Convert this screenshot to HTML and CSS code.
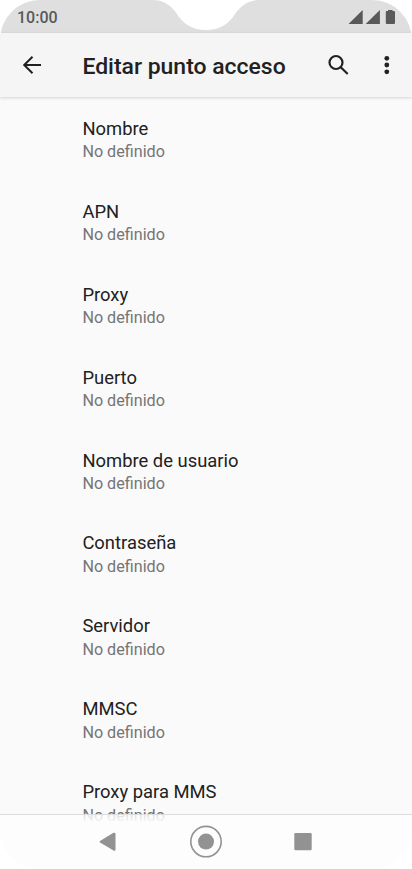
FILE: index.html
```html
<!DOCTYPE html>
<html lang="es">
<head>
<meta charset="utf-8">
<title>Editar punto acceso</title>
<link rel="stylesheet" href="styles.css">
</head>
<body>
<div class="phone">
  <div class="status">
    <span class="clock">10:00</span>
    <svg class="notch" width="108" height="31" viewBox="0 0 108 31"><path d="M0 0H108C95 0 88 6 81 17Q71 30 54 30Q37 30 27 17C20 6 13 0 0 0Z" fill="#fff"/></svg>
    <svg class="signals" width="48" height="16" viewBox="0 0 48 16" fill="#595959"><path d="M0.500 15L14.700 1V15ZM17.700 15L31.900 1V15ZM37.800 3Q37.800 2 38.800 2H40V1H44.500V2H46Q47 2 47 3V14Q47 15 46 15H38.800Q37.800 15 37.800 14Z"/></svg>
  </div>
  <header class="bar">
    <svg class="back" width="20" height="20" viewBox="0 0 20 20" fill="none" stroke="#212121" stroke-width="2"><path d="M19 10H2.500M10.500 1.700L2.200 10L10.500 18.300"/></svg>
    <h1 class="title">Editar punto acceso</h1>
    <svg class="search" width="22" height="22" viewBox="0 0 22 22" fill="none" stroke="#212121" stroke-width="2.200"><circle cx="8" cy="8.500" r="6.500"/><path d="M12.500 13L19.700 20"/></svg>
    <svg class="more" width="6" height="20" viewBox="0 0 6 20" fill="#212121"><circle cx="2.800" cy="3.300" r="2.400"/><circle cx="2.800" cy="10" r="2.400"/><circle cx="2.800" cy="16.800" r="2.400"/></svg>
  </header>
  <main class="list">
    <div class="item"><div class="name">Nombre</div><div class="value">No definido</div></div>
    <div class="item"><div class="name">APN</div><div class="value">No definido</div></div>
    <div class="item"><div class="name">Proxy</div><div class="value">No definido</div></div>
    <div class="item"><div class="name">Puerto</div><div class="value">No definido</div></div>
    <div class="item"><div class="name">Nombre de usuario</div><div class="value">No definido</div></div>
    <div class="item"><div class="name">Contraseña</div><div class="value">No definido</div></div>
    <div class="item"><div class="name">Servidor</div><div class="value">No definido</div></div>
    <div class="item"><div class="name">MMSC</div><div class="value">No definido</div></div>
    <div class="item"><div class="name">Proxy para MMS</div><div class="value">No definido</div></div>
  </main>
  <nav class="nav">
    <svg width="18" height="20" viewBox="0 0 18 20"><path d="M2 8.900Q1 9.700 2 10.500L15.500 18.600Q17.500 19.200 17.500 17.700V1.700Q17.500 0.200 15.500 0.800Z" fill="#929292"/></svg>
    <svg class="home" width="34" height="34" viewBox="0 0 34 34"><circle cx="17" cy="16.600" r="15.200" fill="none" stroke="#929292" stroke-width="1.600"/><circle cx="17" cy="16.600" r="8" fill="#929292"/></svg>
    <svg width="20" height="20" viewBox="0 0 20 20" class="recent"><rect x="1.300" y="1.100" width="17.400" height="17.200" rx="1.200" fill="#929292"/></svg>
  </nav>
</div>
</body>
</html>
```
FILE: styles.css
```css
* { box-sizing: border-box; }
body { margin: 0; background: #fff; font-family: Roboto, sans-serif; }
.phone {
  position: relative;
  width: 412px;
  height: 869px;
  overflow: hidden;
  display: flex;
  flex-direction: column;
  background: #fafafa;
  border-radius: 40px;
}
.status {
  position: relative;
  height: 33px;
  flex: none;
  display: flex;
  justify-content: space-between;
  padding: 9px 16px 0 17px;
  background: #dfdfdf;
}
.clock { font-size: 16px; line-height: 17px; font-weight: 500; color: #595959; }
.notch { position: absolute; left: 152px; top: 0; }
.bar {
  position: relative;
  height: 64px;
  flex: none;
  display: flex;
  align-items: center;
  padding: 0 22px;
  background: #f5f5f5;
  box-shadow: 0 1px 3px rgba(0, 0, 0, .16);
}
.title {
  margin: 3px 0 0 40.4px;
  width: 245.6px;
  font-size: 22.95px;
  line-height: 30px;
  font-weight: 500;
  color: #212121;
  white-space: nowrap;
}
.more { margin-left: auto; }
.list { flex: 1; padding: 20px 0 0 82.4px; }
.item { height: 82.9px; white-space: nowrap; }
.name { font-size: 18.4px; line-height: 24px; color: #212121; }
.value { margin-top: .4px; font-size: 16.15px; line-height: 22px; color: #757575; }
.nav {
  position: absolute;
  left: 0;
  right: 0;
  bottom: 0;
  height: 55px;
  display: flex;
  align-items: center;
  padding-left: 98px;
  background: linear-gradient(rgba(253, 253, 253, .78), #fdfdfd 9px);
  border-top: 1px solid #dcdcdc;
}
.home { margin-left: 73px; }
.recent { margin-left: 70px; }
```
